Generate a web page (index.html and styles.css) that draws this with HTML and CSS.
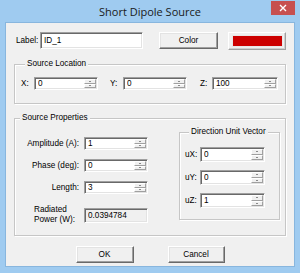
FILE: index.html
```html
<!DOCTYPE html>
<html>
<head>
<meta charset="utf-8">
<link rel="stylesheet" href="styles.css">
</head>
<body>
<div class="window">
  <div class="titlebar">
    <span></span>
    <div class="title">Short Dipole Source</div>
    <div class="close"><svg width="8" height="8" viewBox="0 0 8 8"><path d="M1 1L7 7M7 1L1 7" stroke="#fff" stroke-width="1.4"/></svg></div>
  </div>
  <div class="client">
    <div class="row-top">
      <span class="lbl-label">Label:</span>
      <input class="edit name" value="ID_1">
      <div class="btn color-btn">Color</div>
      <div class="swatch"><div class="swatch-fill"></div></div>
    </div>

    <fieldset class="group loc">
      <legend>Source Location</legend>
      <div class="loc-row">
        <span class="axis">X:</span>
        <div class="spin w64"><input class="val" value="0"><div class="arrows"><i class="up"></i><i class="down"></i></div></div>
        <span class="axis ax-y">Y:</span>
        <div class="spin w64"><input class="val" value="0"><div class="arrows"><i class="up"></i><i class="down"></i></div></div>
        <span class="axis ax-z">Z:</span>
        <div class="spin w66"><input class="val" value="100"><div class="arrows"><i class="up"></i><i class="down"></i></div></div>
      </div>
    </fieldset>

    <fieldset class="group props">
      <legend>Source Properties</legend>
      <div class="props-body">
        <div class="prop-col">
          <div class="prop-row"><span class="plabel">Amplitude (A):</span><div class="spin w64"><input class="val" value="1"><div class="arrows"><i class="up"></i><i class="down"></i></div></div></div>
          <div class="prop-row"><span class="plabel">Phase (deg):</span><div class="spin w64"><input class="val" value="0"><div class="arrows"><i class="up"></i><i class="down"></i></div></div></div>
          <div class="prop-row"><span class="plabel">Length:</span><div class="spin w64"><input class="val" value="3"><div class="arrows"><i class="up"></i><i class="down"></i></div></div></div>
          <div class="rad-row"><span class="rad-label">Radiated<br>Power (W):</span><input class="edit readonly" value="0.0394784" readonly></div>
        </div>
        <fieldset class="group dir">
          <legend>Direction Unit Vector</legend>
          <div class="dir-row"><span class="ulabel">uX:</span><div class="spin w65 tall"><input class="val" value="0"><div class="arrows"><i class="up"></i><i class="down"></i></div></div></div>
          <div class="dir-row"><span class="ulabel">uY:</span><div class="spin w65 tall"><input class="val" value="0"><div class="arrows"><i class="up"></i><i class="down"></i></div></div></div>
          <div class="dir-row"><span class="ulabel">uZ:</span><div class="spin w65 tall"><input class="val" value="1"><div class="arrows"><i class="up"></i><i class="down"></i></div></div></div>
        </fieldset>
      </div>
    </fieldset>

    <div class="buttons">
      <div class="btn ok">OK</div>
      <div class="btn cancel">Cancel</div>
    </div>
  </div>
</div>
</body>
</html>
```
FILE: styles.css
```css
* { box-sizing: border-box; }
body {
  margin: 0;
  font-family: "Liberation Sans", Arial, sans-serif;
  font-size: 8.2px;
  color: #000;
}
.window {
  width: 300px;
  height: 273px;
  background: #9fcbf0;
  display: flex;
  flex-direction: column;
  padding: 0 5px 6px 5px;
}
.titlebar {
  height: 22px;
  display: grid;
  grid-template-columns: 1fr auto 1fr;
  align-items: start;
}
.title {
  font-family: "Open Sans", "Liberation Sans", sans-serif;
  font-size: 11px;
  line-height: 22px;
  margin-top: 1px;
  color: #1a1a1a;
}
.close {
  justify-self: end;
  margin-top: 1px;
  width: 24px;
  height: 14px;
  background: #c75050;
  display: flex;
  align-items: center;
  justify-content: center;
}
.close svg { display: block; }
.client {
  flex: 1;
  background: #f0f0f0;
  border: 1px solid #88b6de;
  padding: 9px 8px 0 8px;
  display: flex;
  flex-direction: column;
}
.row-top {
  display: flex;
  align-items: flex-start;
  height: 18px;
  padding-left: 2px;
}
.lbl-label {
  width: 24px;
  line-height: 17px;
}
.edit {
  font: inherit;
  color: #000;
  background: #fff;
  border: 1px solid;
  border-color: #a0a0a0 #fff #fff #a0a0a0;
  box-shadow: inset 1px 1px 0 #696969, inset -1px -1px 0 #e3e3e3;
  padding: 0 0 0 3px;
  outline: none;
  margin: 0;
}
.name { width: 103px; height: 17px; }
.btn {
  background: #f0f0f0;
  border: 1px solid;
  border-color: #fff #696969 #696969 #fff;
  box-shadow: inset -1px -1px 0 #a0a0a0, inset 1px 1px 0 #e3e3e3;
  display: flex;
  align-items: center;
  justify-content: center;
  height: 17px;
}
.color-btn { width: 59px; margin-left: 16px; }
.swatch {
  width: 58px;
  height: 18px;
  margin-left: 10px;
  border: 1px solid;
  border-color: #fff #a0a0a0 #a0a0a0 #fff;
  box-shadow: inset -1px -1px 0 #d0d0d0;
  padding: 2px 2px 2px 3px;
}
.swatch-fill {
  width: 100%;
  height: 100%;
  background: #cc0000;
  border: 1px solid #e8e8e8;
}

.group {
  margin: 0;
  border: 1px solid #c6c6c6;
  box-shadow: inset 1px 1px 0 #fff, 1px 1px 0 #fff;
  min-width: 0;
}
.group legend {
  padding: 0 2px;
  margin-left: 4px;
  line-height: 10px;
  background: #f0f0f0;
}
.loc {
  margin-top: 9px;
  padding: 8px 6px 13px 6px;
}
.loc-row { display: flex; align-items: center; }
.axis { width: 13px; }
.ax-y { margin-left: 12px; }
.ax-z { margin-left: 13px; width: 12px; }

.spin {
  display: flex;
  height: 13px;
  background: #fff;
  border: 1px solid;
  border-color: #a0a0a0 #fff #fff #a0a0a0;
  box-shadow: inset 1px 1px 0 #696969, inset -1px -1px 0 #e3e3e3;
  padding: 1px 1px 1px 1px;
}
.spin.tall { height: 15px; }
.w64 { width: 64px; }
.w65 { width: 65px; }
.w66 { width: 66px; }
.val {
  flex: 1;
  width: 0;
  border: 0;
  padding: 0 0 0 2px;
  margin: 0;
  font: inherit;
  color: #000;
  background: transparent;
  outline: none;
  height: 100%;
}
.arrows {
  width: 12px;
  display: flex;
  flex-direction: column;
  gap: 0;
}
.arrows i {
  flex: 1;
  display: flex;
  align-items: center;
  justify-content: center;
  background: #f0f0f0;
  border: 1px solid;
  border-color: #fff #a0a0a0 #a0a0a0 #fff;
}
.arrows i::after {
  content: "";
  width: 0;
  height: 0;
  border-left: 1.5px solid transparent;
  border-right: 1.5px solid transparent;
}
.arrows .up::after { border-bottom: 1.5px solid #222; }
.arrows .down::after { border-top: 1.5px solid #222; }

.props {
  margin-top: 9px;
  padding: 0 0 10px 1px;
}
.props-body { display: flex; align-items: flex-start; }
.prop-col {
  display: flex;
  flex-direction: column;
  padding-top: 14px;
}
.prop-row {
  display: flex;
  align-items: center;
  margin-bottom: 9px;
}
.prop-row:nth-child(3) { margin-bottom: 11px; }
.plabel {
  width: 63px;
  text-align: right;
  margin-right: 5px;
}
.rad-row { display: flex; align-items: center; }
.rad-label {
  width: 68px;
  padding-left: 18px;
  line-height: 10px;
}
.readonly {
  width: 64px;
  height: 15px;
  background: #f0f0f0;
}
.dir {
  margin-top: 4px;
  margin-left: 31px;
  width: 101px;
  padding: 10px 5px 11px 5px;
}
.dir-row {
  display: flex;
  align-items: center;
  margin-bottom: 8px;
}
.dir-row:last-child { margin-bottom: 0; }
.ulabel { width: 15px; }

.buttons {
  display: flex;
  justify-content: center;
  gap: 34px;
  margin-top: 10px;
}
.ok { width: 58px; }
.cancel { width: 57px; }
```
